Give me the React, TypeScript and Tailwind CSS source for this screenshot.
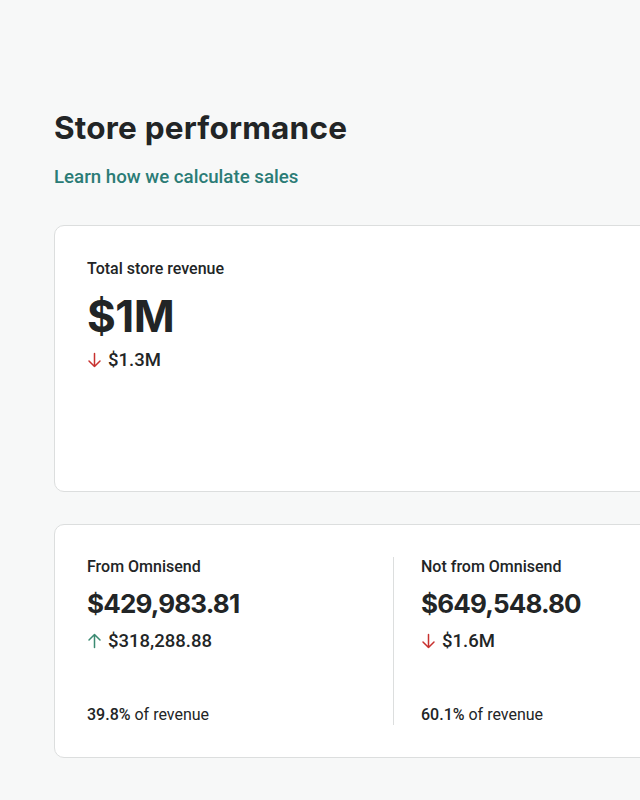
import React from "react";

const Down = () => (
  <svg width="15" height="16" viewBox="0 0 15 16" fill="none" stroke="#c8312f" strokeWidth="1.5" strokeLinecap="round" strokeLinejoin="round">
    <path d="M7.5 1.5v13M2 9l5.5 5.5L13 9" />
  </svg>
);
const Up = () => (
  <svg width="15" height="16" viewBox="0 0 15 16" fill="none" stroke="#3b8a72" strokeWidth="1.5" strokeLinecap="round" strokeLinejoin="round">
    <path d="M7.5 14.5v-13M2 7l5.5-5.5L13 7" />
  </svg>
);

export default function App() {
  return (
    <div
      className="w-[640px] h-[800px] overflow-hidden bg-[#f7f8f8] text-[#222526]"
      style={{ fontFamily: "Roboto, 'Liberation Sans', sans-serif" }}
    >
      <div className="pl-[54px] pt-[110px]">
        <h1 className="text-[31.5px] leading-[36px] font-bold tracking-[0.2px]" style={{ fontFamily: "Inter, 'Noto Sans', sans-serif" }}>
          Store performance
        </h1>
        <a className="block mt-[19px] text-[18.7px] leading-[24px] font-medium text-[#2b7c76]">
          Learn how we calculate sales
        </a>
        <div className="mt-[36px] w-[700px] h-[267px] bg-white border border-[#dcdede] rounded-[10px] pl-[32px] pt-[33px]">
          <div className="text-[16px] leading-[20px] font-medium">Total store revenue</div>
          <div className="mt-[12px] text-[44px] leading-[50px] font-bold tracking-[-0.5px]" style={{ fontFamily: "Inter, 'Noto Sans', sans-serif" }}>$1M</div>
          <div className="mt-[8px] flex items-center gap-[6px] text-[18.5px] leading-[22px] font-medium">
            <Down />
            <span>$1.3M</span>
          </div>
        </div>
        <div className="mt-[32px] w-[700px] h-[234px] bg-white border border-[#dcdede] rounded-[10px] flex py-[32px]">
          <div className="w-[338px] pl-[32px] flex flex-col">
            <div className="text-[16px] leading-[20px] font-medium">From Omnisend</div>
            <div className="mt-[10px] text-[26px] leading-[34px] font-bold tracking-[-0.85px]" style={{ fontFamily: "Inter, 'Noto Sans', sans-serif" }}>$429,983.81</div>
            <div className="mt-[9px] flex items-center gap-[6px] text-[18.5px] leading-[22px] font-medium">
              <Up />
              <span>$318,288.88</span>
            </div>
            <div className="mt-auto text-[16px] leading-[20px]">
              <span className="font-medium">39.8%</span> of revenue
            </div>
          </div>
          <div className="border-l border-[#dcdede] pl-[27px] flex flex-col">
            <div className="text-[16px] leading-[20px] font-medium">Not from Omnisend</div>
            <div className="mt-[10px] text-[26px] leading-[34px] font-bold tracking-[-0.85px]" style={{ fontFamily: "Inter, 'Noto Sans', sans-serif" }}>$649,548.80</div>
            <div className="mt-[9px] flex items-center gap-[6px] text-[18.5px] leading-[22px] font-medium">
              <Down />
              <span>$1.6M</span>
            </div>
            <div className="mt-auto text-[16px] leading-[20px]">
              <span className="font-medium">60.1%</span> of revenue
            </div>
          </div>
        </div>
      </div>
    </div>
  );
}
